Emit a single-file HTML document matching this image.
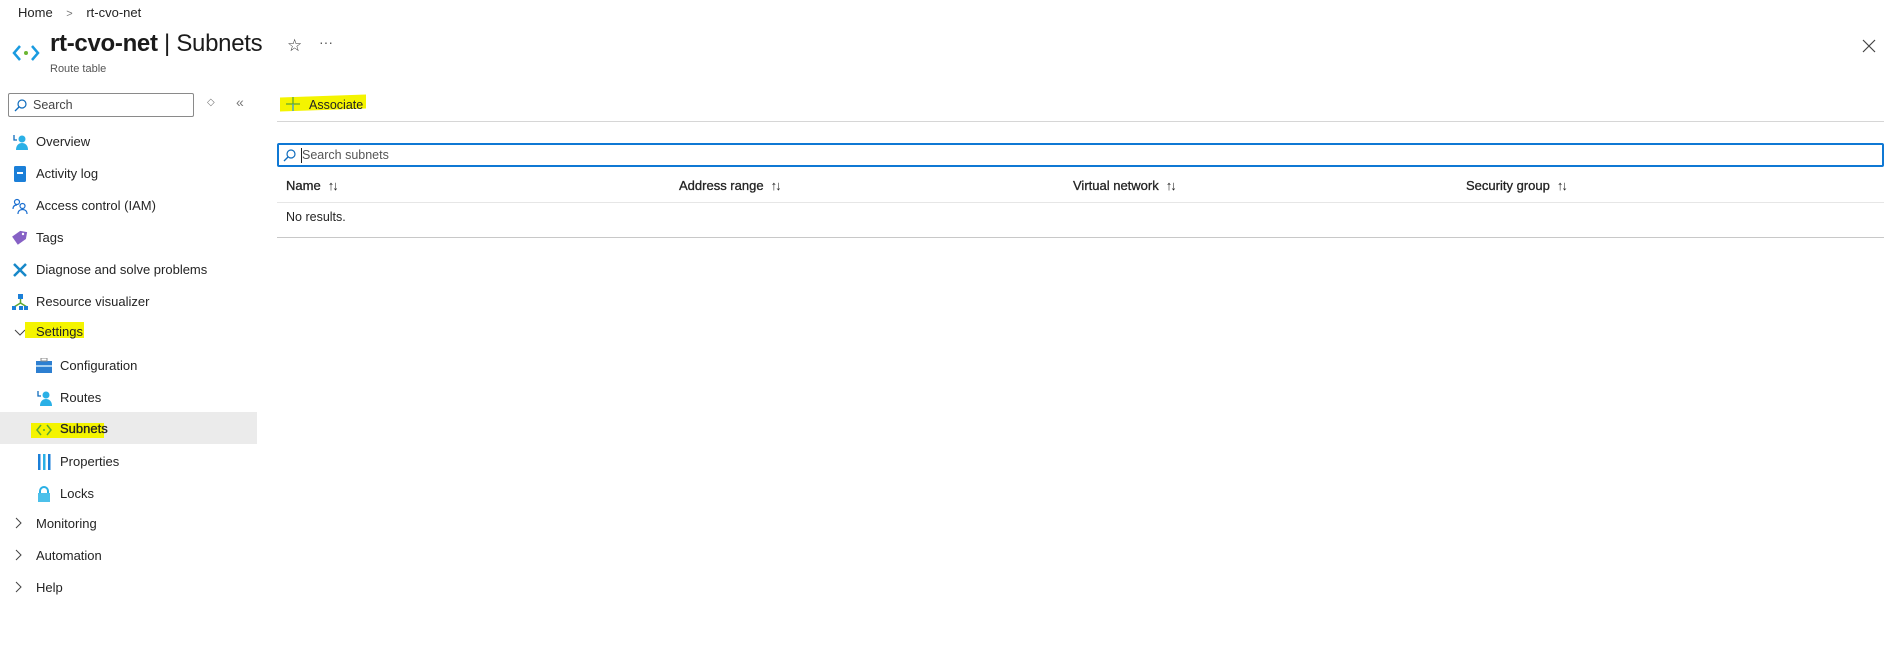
<!DOCTYPE html>
<html><head><meta charset="utf-8"><style>
*{box-sizing:border-box;margin:0;padding:0}
body{width:1898px;height:653px;background:#fff;font-family:"Liberation Sans",sans-serif;color:#242424;position:relative;overflow:hidden;font-size:13px}
.a{position:absolute;white-space:nowrap}
.hl{background:#f4f400}
.nav{position:absolute;left:0;width:257px;height:32px;display:flex;align-items:center;font-size:13px}
.nav .ic{position:absolute;left:12px;top:9px;width:16px;height:16px}
.nav span{position:absolute;left:36px}
.sub .ic{left:36px}.sub span{left:60px}
.chev{position:absolute;left:14px;top:10px;width:10px;height:12px}
.th{position:absolute;top:178px;font-weight:normal;font-size:13px;color:#242424;-webkit-text-stroke:0.3px #242424}
.th i{font-style:normal;font-weight:normal;margin-left:7px;letter-spacing:-2px;-webkit-text-stroke:0}
</style></head><body>
<div class="a" style="left:18px;top:5px;font-size:13px">Home <span style="color:#777;margin:0 10px;font-size:11px">&gt;</span> rt-cvo-net</div>
<svg class="a" style="left:12px;top:44px" width="28" height="18" viewBox="0 0 28 18"><path d="M8 2 L2 9 L8 16" stroke="#1a9be0" stroke-width="2.5" fill="none"/><path d="M20 2 L26 9 L20 16" stroke="#1a9be0" stroke-width="2.5" fill="none"/><circle cx="14" cy="9" r="2" fill="#6bb632"/></svg>
<div class="a" style="left:50px;top:30px;font-size:24px;font-weight:bold;color:#1b1b1b;letter-spacing:-0.3px">rt-cvo-net <span style="font-weight:normal">| Subnets</span></div>
<div class="a" style="left:50px;top:63px;font-size:11px;color:#555">Route table</div>
<div class="a" style="left:287px;top:36px;font-size:17px;color:#333">☆</div>
<div class="a" style="left:319px;top:34px;font-size:14px;color:#555">···</div>
<svg class="a" style="left:1862px;top:39px" width="14" height="14"><path d="M1 1L13 13M13 1L1 13" stroke="#444" stroke-width="1.2"/></svg>

<div class="a" style="left:8px;top:93px;width:186px;height:24px;border:1px solid #8a8a8a;border-radius:2px"></div>
<svg class="a" style="left:14px;top:99px" width="13" height="13"><circle cx="8" cy="5" r="4" stroke="#0f6cbd" fill="none" stroke-width="1.2"/><path d="M5 8L1 12" stroke="#0f6cbd" stroke-width="1.3"/></svg>
<div class="a" style="left:33px;top:98px;font-size:12.5px;color:#444">Search</div>
<div class="a" style="left:207px;top:97px;font-size:10px;color:#777">◇</div>
<div class="a" style="left:236px;top:94px;font-size:14px;color:#777">«</div>

<div class="nav" style="top:125px"><svg class="ic" viewBox="0 0 16 16"><circle cx="10" cy="5" r="3.5" fill="#2ab0e6"/><path d="M4 16c0-5 3-7 6-7s6 2 6 7z" fill="#2ab0e6"/><path d="M2 1v5h3" stroke="#0f6cbd" fill="none" stroke-width="1.3"/></svg><span>Overview</span></div>
<div class="nav" style="top:157px"><svg class="ic" viewBox="0 0 16 16"><rect x="2" y="0" width="12" height="16" rx="1.5" fill="#1b7fd8"/><rect x="5" y="6" width="6" height="2" fill="#fff"/></svg><span>Activity log</span></div>
<div class="nav" style="top:189px"><svg class="ic" viewBox="0 0 16 16" fill="none" stroke="#1b6fd0" stroke-width="1.2"><circle cx="5" cy="4" r="2.5"/><circle cx="10.5" cy="8" r="2.5"/><path d="M1 11c0-3 2-4 4-4M6 16c0-3 2-4.5 4.5-4.5S15 13 15 16"/></svg><span>Access control (IAM)</span></div>
<div class="nav" style="top:221px"><svg class="ic" viewBox="0 0 16 16"><path d="M7 1h7v7l-7 7-7-7z" fill="#8661c5" transform="rotate(10 8 8)"/><circle cx="11" cy="4" r="1.2" fill="#fff"/></svg><span>Tags</span></div>
<div class="nav" style="top:253px"><svg class="ic" viewBox="0 0 16 16" stroke="#1788c9" stroke-width="2.5"><path d="M2 2L14 14M14 2L2 14"/></svg><span>Diagnose and solve problems</span></div>
<div class="nav" style="top:285px"><svg class="ic" viewBox="0 0 16 16"><rect x="6" y="0" width="5" height="5" fill="#1b7fd8"/><path d="M8.5 5v5M2 13l6.5-4 6.5 4" stroke="#5ea830" fill="none" stroke-width="1.5"/><rect x="0" y="12" width="4" height="4" fill="#1b7fd8"/><rect x="7" y="12" width="4" height="4" fill="#1b7fd8"/><rect x="12" y="12" width="4" height="4" fill="#1b7fd8"/></svg><span>Resource visualizer</span></div>
<div class="nav" style="top:315px"><svg class="chev" viewBox="0 0 12 10" style="top:12px;width:12px"><path d="M1 2l5 5 5-5" stroke="#444" fill="none"/></svg><div class="hl a" style="left:25px;top:7px;width:59px;height:16px"></div><span style="left:36px">Settings</span></div>
<div class="nav sub" style="top:349px"><svg class="ic" viewBox="0 0 16 16"><rect x="0" y="3" width="16" height="12" fill="#2d7fd1"/><rect x="0" y="7" width="16" height="2" fill="#a8d0f0"/><rect x="5" y="0" width="6" height="3" fill="none" stroke="#888"/></svg><span>Configuration</span></div>
<div class="nav sub" style="top:381px"><svg class="ic" viewBox="0 0 16 16"><circle cx="10" cy="5" r="3.5" fill="#2ab0e6"/><path d="M4 16c0-5 3-7 6-7s6 2 6 7z" fill="#2ab0e6"/><path d="M2 1v5h3" stroke="#0f6cbd" fill="none" stroke-width="1.3"/></svg><span>Routes</span></div>
<div class="nav sub" style="top:412px;background:#ebebeb"><div class="hl a" style="left:31px;top:11px;width:73px;height:15px"></div><svg class="ic" viewBox="0 0 16 16" style="top:10px"><path d="M5 3L1 8l4 5M11 3l4 5-4 5" stroke="#5ea830" fill="none" stroke-width="1.5"/><circle cx="8" cy="8" r="1" fill="#5ea830"/></svg><span style="-webkit-text-stroke:0.3px #242424">Subnets</span></div>
<div class="nav sub" style="top:445px"><svg class="ic" viewBox="0 0 16 16"><rect x="2" y="0" width="2.5" height="16" fill="#1b7fd8"/><rect x="7" y="0" width="2.5" height="16" fill="#2ab0e6"/><rect x="12" y="0" width="2.5" height="16" fill="#1b7fd8"/></svg><span>Properties</span></div>
<div class="nav sub" style="top:477px"><svg class="ic" viewBox="0 0 16 16"><path d="M4 7V5a4 4 0 018 0v2" stroke="#2ab0e6" fill="none" stroke-width="2"/><rect x="2" y="7" width="12" height="9" fill="#4cc0ea"/></svg><span>Locks</span></div>
<div class="nav" style="top:507px"><svg class="chev" viewBox="0 0 10 12"><path d="M2 1l5 5-5 5" stroke="#444" fill="none"/></svg><span>Monitoring</span></div>
<div class="nav" style="top:539px"><svg class="chev" viewBox="0 0 10 12"><path d="M2 1l5 5-5 5" stroke="#444" fill="none"/></svg><span>Automation</span></div>
<div class="nav" style="top:571px"><svg class="chev" viewBox="0 0 10 12"><path d="M2 1l5 5-5 5" stroke="#444" fill="none"/></svg><span>Help</span></div>

<div class="a hl" style="left:280px;top:96px;width:86px;height:14px;transform:skewY(-2deg)"></div>
<svg class="a" style="left:286px;top:97px" width="14" height="14"><path d="M7 0v14M0 7h14" stroke="#5ea830" stroke-width="1.3"/><path d="M7 7v7" stroke="#4aa0d8" stroke-width="1.3"/></svg>
<div class="a" style="left:309px;top:98px;font-size:12.5px">Associate</div>
<div class="a" style="left:277px;top:121px;width:1607px;height:1px;background:#d6d6d6"></div>

<div class="a" style="left:277px;top:143px;width:1607px;height:24px;border:2px solid #0f78d4;border-radius:2px"></div>
<svg class="a" style="left:283px;top:149px" width="13" height="13"><circle cx="8" cy="5" r="4" stroke="#0f6cbd" fill="none" stroke-width="1.2"/><path d="M5 8L1 12" stroke="#0f6cbd" stroke-width="1.3"/></svg>
<div class="a" style="left:301px;top:148px;width:1px;height:15px;background:#222"></div>
<div class="a" style="left:302px;top:148px;font-size:12.5px;color:#555">Search subnets</div>

<div class="th" style="left:286px">Name<i>↑↓</i></div>
<div class="th" style="left:679px">Address range<i>↑↓</i></div>
<div class="th" style="left:1073px">Virtual network<i>↑↓</i></div>
<div class="th" style="left:1466px">Security group<i>↑↓</i></div>
<div class="a" style="left:277px;top:202px;width:1607px;height:1px;background:#e6e6e6"></div>
<div class="a" style="left:286px;top:210px;font-size:12.5px">No results.</div>
<div class="a" style="left:277px;top:237px;width:1607px;height:1px;background:#c8c8c8"></div>
</body></html>
